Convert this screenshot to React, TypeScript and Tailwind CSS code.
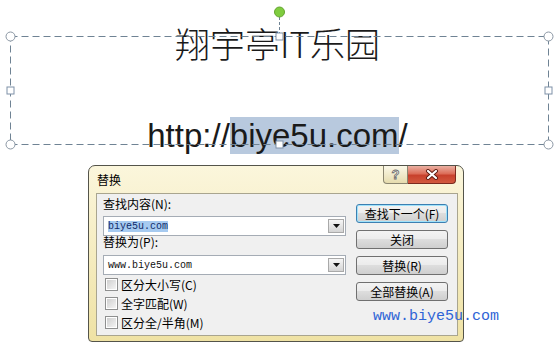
import React from 'react';

const cjk = "font-['Noto_Sans_CJK_SC',sans-serif]";

function SelectionFrame() {
  const corners = [
    [10.5, 36.5],
    [548.5, 36.5],
    [10.5, 144.5],
    [548.5, 144.5],
  ];
  const sides = [
    [10.5, 90.5],
    [548.5, 90.5],
    [279.5, 36.5],
    [279.5, 144.5],
  ];
  return (
    <svg className="absolute inset-0 pointer-events-none" width={555} height={342}>
      <rect x={10.5} y={36.5} width={538} height={108} fill="none" stroke="#6f8394" strokeDasharray="7 4" />
      <line x1={279.5} y1={17} x2={279.5} y2={33} stroke="#6f8394" strokeDasharray="3 2" />
      <circle cx={279.5} cy={12} r={5} fill="#7fcc3f" stroke="#64a52f" />
      {corners.map(([x, y]) => (
        <circle key={`c${x}-${y}`} cx={x} cy={y} r={4.5} fill="#fff" stroke="#8a96a3" />
      ))}
      {sides.map(([x, y]) => (
        <rect key={`s${x}-${y}`} x={x - 3.5} y={y - 3.5} width={7} height={7} fill="#fff" stroke="#7f91a8" />
      ))}
    </svg>
  );
}

function Combo({ children }: { children: React.ReactNode }) {
  return (
    <div className="h-[20px] border border-[#a5acb5] bg-white flex items-center pl-[4px] pr-[1px]">
      <span className="font-['Liberation_Mono',monospace] text-[10px] leading-[11px] text-[#111]">{children}</span>
      <div className="ml-auto w-[16px] h-[14px] border border-[#a9a9a9] bg-gradient-to-b from-[#f6f6f6] to-[#d4d4d4] flex items-center justify-center">
        <svg width="7" height="4" viewBox="0 0 7 4">
          <path d="M0 0h7L3.5 4z" fill="#111" />
        </svg>
      </div>
    </div>
  );
}

function Check({ label }: { label: string }) {
  return (
    <div className="h-[19px] flex items-center">
      <div className="ml-[2px] w-[13px] h-[13px] border border-[#8e8f8f] bg-white p-[1px]">
        <div className="w-full h-full bg-gradient-to-br from-[#cfcfcf] to-[#f4f4f4]" />
      </div>
      <span className={`ml-[3px] text-[12px] leading-[12px] text-black ${cjk}`}>{label}</span>
    </div>
  );
}

function Btn({ label, focused }: { label: string; focused?: boolean }) {
  return (
    <div
      className={`h-[19px] w-[92px] rounded-[3px] border flex items-center justify-center text-[12px] leading-none text-black bg-[linear-gradient(#f3f3f3_0%,#ebebeb_50%,#dddddd_50%,#cfcfcf_100%)] ${cjk} ${
        focused ? 'border-[#3c7fb1] shadow-[inset_0_0_0_1px_#9fe2fb]' : 'border-[#707070]'
      }`}
    >
      {label}
    </div>
  );
}

function ReplaceDialog() {
  return (
    <div className="ml-[88px] w-[376px] h-[177px] border border-[#54544a] rounded-t-[7px] rounded-b-[4px] bg-gradient-to-b from-[#fbf6dc] to-[#efe2a4] flex flex-col pl-[7px] pr-[5px] pb-[5px]">
      <div className="h-[27px] flex items-start shrink-0">
        <span className={`mt-[6px] ml-[1px] text-[12px] leading-[16px] text-black ${cjk}`}>替换</span>
        <div className="ml-auto mr-[2px] flex">
          <div className="w-[25px] h-[18px] border border-t-0 border-[#8b8670] rounded-bl-[4px] bg-gradient-to-b from-[#fbf8e8] to-[#e6dcae] flex items-center justify-center">
            <span className="font-['Liberation_Sans',sans-serif] text-[13px] font-bold leading-none text-[#efefef] [-webkit-text-stroke:0.8px_#6d6d6d]">?</span>
          </div>
          <div className="w-[48px] h-[18px] border border-t-0 border-l-0 border-[#7b2a1e] rounded-br-[4px] bg-[linear-gradient(#eab0a2_0%,#dc6d58_45%,#c8412c_55%,#d2593f_100%)] flex items-center justify-center">
            <svg width="14" height="11" viewBox="0 0 14 11">
              <path d="M3 2l8 7M11 2l-8 7" stroke="#5a1a10" strokeWidth="4" strokeLinecap="round" />
              <path d="M3 2l8 7M11 2l-8 7" stroke="#fff" strokeWidth="2.2" strokeLinecap="round" />
            </svg>
          </div>
        </div>
      </div>
      <div className="flex-1 bg-[#f0f0f0] border border-[#a9a58f] flex pl-[6px]">
        <div className="w-[243px] shrink-0 pt-[4px] flex flex-col">
          <span className={`text-[12px] leading-[12px] text-black ${cjk}`}>查找内容(N):</span>
          <div className="mt-[6px]">
            <Combo>
              <span className="bg-[#a6caf0] text-[#102a6a]">biye5u.com</span>
            </Combo>
          </div>
          <span className={`text-[12px] leading-[12px] text-black ${cjk}`}>替换为(P):</span>
          <div className="mt-[7px]">
            <Combo>www.biye5u.com</Combo>
          </div>
          <Check label="区分大小写(C)" />
          <Check label="全字匹配(W)" />
          <Check label="区分全/半角(M)" />
        </div>
        <div className="ml-[10px] w-[92px] shrink-0 pt-[10px] flex flex-col gap-[7px]">
          <Btn label="查找下一个(F)" focused />
          <Btn label="关闭" />
          <Btn label="替换(R)" />
          <Btn label="全部替换(A)" />
          <span className="ml-[17px] mt-[1px] whitespace-nowrap font-['Liberation_Mono',monospace] text-[15px] leading-[15px] text-[#2f64d6]">
            www.biye5u.com
          </span>
        </div>
      </div>
    </div>
  );
}

export default function App() {
  return (
    <div className="relative w-[555px] h-[342px] overflow-hidden bg-white">
      <div className="flex flex-col items-center pt-[25px]">
        <div className={`text-[35px] leading-[35px] font-light text-[#1a1a1a] ${cjk}`}>翔宇亭IT乐园</div>
        <div className="mt-[54px] text-[33px] leading-[43px] text-[#1a1a1a] font-['Liberation_Sans',Arial,sans-serif] whitespace-nowrap">
          http://<span className="bg-[#b8c9de]">biye5u.com</span>/
        </div>
      </div>
      <div className="mt-[8px]">
        <ReplaceDialog />
      </div>
      <SelectionFrame />
    </div>
  );
}
